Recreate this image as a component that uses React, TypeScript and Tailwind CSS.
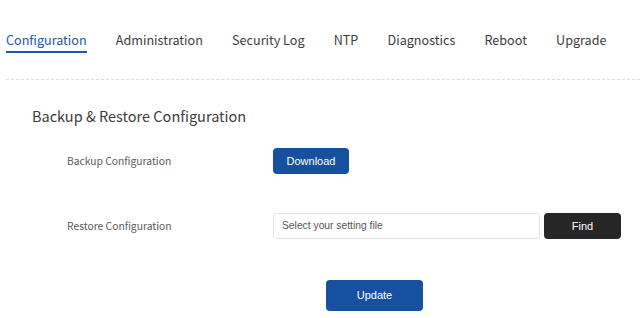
export default function App() {
  const tabs = ['Configuration', 'Administration', 'Security Log', 'NTP', 'Diagnostics', 'Reboot', 'Upgrade']
  const arial = { fontFamily: '"Liberation Sans", Arial, sans-serif' }

  return (
    <div className="w-[640px] h-[318px] bg-white overflow-hidden" style={{ fontFamily: '"Noto Sans CJK JP", "Noto Sans", sans-serif' }}>
      {/* Tabs */}
      <nav className="ml-[6px] border-b border-dashed border-[#dcdcdc] flex gap-[29.2px] pt-[29px] h-[80px] whitespace-nowrap">
        {tabs.map((t, i) => (
          <div
            key={t}
            className={
              i === 0
                ? 'h-[24px] text-[12.6px] leading-[21px] text-[#2058a8] border-b-2 border-[#2058a8]'
                : 'h-[24px] text-[12.6px] leading-[21px] text-[#3c3c3c]'
            }
          >
            {t}
          </div>
        ))}
      </nav>

      {/* Backup & Restore */}
      <div className="pl-[32px] pt-[26px]">
        <h2 className="text-[14.5px] leading-[20px] text-[#3c3c3c]">Backup &amp; Restore Configuration</h2>

        <div className="mt-[22px] flex items-center h-[26px]">
          <div className="w-[241px] pl-[35px] text-[10.3px] text-[#5a5a5a]">Backup Configuration</div>
          <button className="w-[76px] h-[26px] rounded-[4px] bg-[#17509e] text-white text-[11px]" style={arial}>
            Download
          </button>
        </div>

        <div className="mt-[39px] flex items-center h-[26px]">
          <div className="w-[241px] pl-[35px] text-[10.3px] text-[#5a5a5a]">Restore Configuration</div>
          <div
            className="w-[267px] h-[26px] border border-[#e4e4e4] rounded-[3px] flex items-center px-[8px] text-[10.3px] text-[#555]"
            style={arial}
          >
            Select your setting file
          </div>
          <button className="ml-[4px] w-[77px] h-[26px] rounded-[4px] bg-[#262626] text-white text-[11px]" style={arial}>
            Find
          </button>
        </div>

        <div className="mt-[41px] pl-[294px]">
          <button className="w-[97px] h-[31px] rounded-[4px] bg-[#17509e] text-white text-[11px]" style={arial}>
            Update
          </button>
        </div>
      </div>
    </div>
  )
}
